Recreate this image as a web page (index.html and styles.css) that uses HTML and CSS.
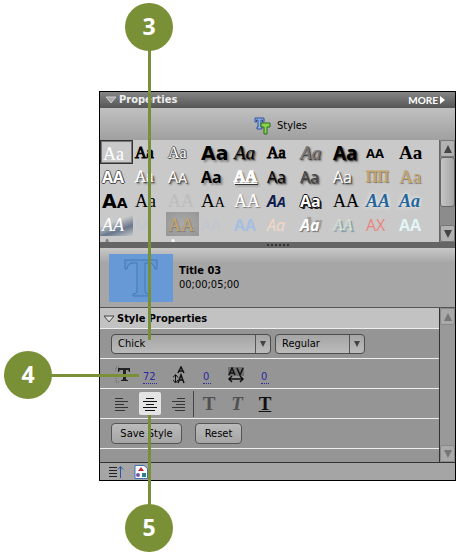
FILE: index.html
```html
<!DOCTYPE html>
<html lang="en">
<head>
  <meta charset="UTF-8" />
  <title>Title Properties</title>
  <meta name="viewport" content="width=device-width, initial-scale=1.0" />
  <link rel="stylesheet" href="styles.css">
</head>
<body>
  <div class="figure">
    <section class="panel">
      <header class="panel-header">
        <svg width="12" height="8" viewBox="0 0 12 8"><path d="M1 1h10L6 7z" fill="#aaa" stroke="#ccc" /></svg>
        <h1>Properties</h1>
        <button class="more" type="button">MORE<svg width="5" height="8" viewBox="0 0 5 8"><path d="M0 0l5 4-5 4z" fill="#fff" /></svg></button>
      </header>

      <div class="styles-bar">
        <svg width="17" height="18" viewBox="0 0 17 18">
          <path d="M1 1h9v4H8.500V3H7v7h1v2H3v-2h1V3H2.500v2H1z" fill="#8eb0e6" stroke="#31539b" />
          <path d="M7 6h9v4h-3v7h-3v-7H7z" fill="#8bd34a" stroke="#2c6c20" />
        </svg>
        <span>Styles</span>
      </div>

      <div class="browser">
        <div class="samples">
          <span class="sample selected serif white">Aa</span>
          <span class="sample narrow-serif">Aa</span>
          <span class="sample narrow-serif outline">Aa</span>
          <span class="sample black-sans large glow">Aa</span>
          <span class="sample script shadow">Aa</span>
          <span class="sample narrow-serif">Aa</span>
          <span class="sample script gray shadow">Aa</span>
          <span class="sample narrow-sans large shadow">Aa</span>
          <span class="sample narrow-sans small">AA</span>
          <span class="sample serif bold large">Aa</span>

          <span class="sample sans outline bold">AA</span>
          <span class="sample narrow-serif white shadow">Aa</span>
          <span class="sample sans white shadow">A<small>A</small></span>
          <span class="sample narrow-sans glow shadow">Aa</span>
          <span class="sample narrow-serif white bold underline shadow">AA</span>
          <span class="sample sans shadow">Aa</span>
          <span class="sample sans dim shadow">Aa</span>
          <span class="sample sans white shadow">Aa</span>
          <span class="sample narrow-serif gold">ΠΠ</span>
          <span class="sample serif gold large">Aa</span>

          <span class="sample black-sans large">A<small>A</small></span>
          <span class="sample serif">Aa</span>
          <span class="sample serif faint">AA</span>
          <span class="sample serif large">A<small>A</small></span>
          <span class="sample serif white soft">AA</span>
          <span class="sample sans navy italic bold">A<small>A</small></span>
          <span class="sample narrow-sans outline shadow">Aa</span>
          <span class="sample serif">AA</span>
          <span class="sample serif blue italic bold">AA</span>
          <span class="sample serif blue italic bold">Aa</span>

          <span class="sample serif white italic sky">AA</span>
          <span class="sample sans pale">M</span>
          <span class="sample serif gold frame">AA</span>
          <span class="sample sans pale">AA</span>
          <span class="sample sans light-blue bold">AA</span>
          <span class="sample sans peach italic">Aa</span>
          <span class="sample sans white italic bold high-shadow">Aa</span>
          <span class="sample narrow-serif mint italic">AA</span>
          <span class="sample sans red">AX</span>
          <span class="sample sans ice bold">AA</span>

          <span class="sample last sans gray">A</span>
          <span class="sample last"></span>
          <span class="sample last sans white">A</span>
        </div>
        <div class="scrollbar">
          <button type="button" aria-label="Scroll styles up"><svg width="8" height="8" viewBox="0 0 8 8"><path d="M4 0l4 8H0z" fill="#444" /></svg></button>
          <span class="thumb"></span>
          <button type="button" aria-label="Scroll styles down"><svg width="8" height="8" viewBox="0 0 8 8"><path d="M4 8l4-8H0z" fill="#444" /></svg></button>
        </div>
      </div>

      <div class="splitter"><span class="grip"></span></div>

      <div class="clip">
        <div class="thumbnail">
          <svg width="36" height="40" viewBox="0 0 36 40"><path d="M2 2h32v9h-2q-1-6-6-6h-4v28q0 3 4 3v2H10v-2q4 0 4-3V5h-4q-5 0-6 6H2z" fill="#6296d2" stroke="#4378b5" stroke-width="1" /></svg>
        </div>
        <div class="clip-text">
          <strong>Title 03</strong>
          <span>00;00;05;00</span>
        </div>
      </div>

      <div class="properties">
        <form class="controls">
          <h2><svg width="12" height="9" viewBox="0 0 12 9"><path d="M1 1h10L6 7z" fill="#ddd" stroke="#444" /></svg>Style Properties</h2>

          <div class="row fonts">
            <label class="dropdown family">
              <select aria-label="Font"><option>Chick</option></select>
              <span class="arrow"></span>
            </label>
            <label class="dropdown weight">
              <select aria-label="Font style"><option>Regular</option></select>
              <span class="arrow"></span>
            </label>
          </div>

          <div class="row numbers">
            <label for="size" aria-label="Size">
              <svg width="16" height="18" viewBox="0 0 16 18">
                <path d="M1 5V1h4M1 12v4h4" fill="none" stroke="#666" stroke-dasharray="1 1" />
                <path d="M3 2h12v4h-1q0-2-2-2h-1v9q0 1 2 1v1H6v-1q2 0 2-1V4H6Q4 4 4 6H3z" fill="#222" />
              </svg>
            </label>
            <input id="size" type="text" value="72">
            <label for="leading" aria-label="Leading">
              <svg width="14" height="18" viewBox="0 0 14 18">
                <path d="M5 7l3-6 3 6M6 5h4M5 17l3-8 3 8M6 14h4" fill="none" stroke="#111" stroke-width="1.500" />
                <path d="M2.500 9v7M0 11.500l2.500-3 2.500 3M0 14l2.500 3 2.500-3" fill="none" stroke="#111" />
              </svg>
            </label>
            <input id="leading" type="text" value="0">
            <label for="kerning" aria-label="Kerning">
              <svg width="18" height="16" viewBox="0 0 18 16">
                <path d="M1 0h16v9H1z" fill="#707070" />
                <path d="M2 8l3-7 3 7M3 6h4M10 1l3 7 3-7M2 12h14M5 9l-3 3 3 3M13 9l3 3-3 3" fill="none" stroke="#111" stroke-width="1.500" />
              </svg>
            </label>
            <input id="kerning" type="text" value="0">
          </div>

          <div class="row tools">
            <button type="button" aria-label="Align left"><svg width="16" height="16" viewBox="0 0 16 16"><path d="M1 2.500h8M1 5.500h13M1 8.500h9M1 11.500h13M1 14.500h10" stroke="#333" /></svg></button>
            <button class="active" type="button" aria-label="Align center"><svg width="16" height="16" viewBox="0 0 16 16"><path d="M4 2.500h8M1 5.500h14M4 8.500h8M1 11.500h14M3 14.500h10" stroke="#111" /></svg></button>
            <button type="button" aria-label="Align right"><svg width="16" height="16" viewBox="0 0 16 16"><path d="M7 2.500h8M2 5.500h13M6 8.500h9M2 11.500h13M5 14.500h10" stroke="#333" /></svg></button>
            <span class="divider"></span>
            <button class="letter" type="button" aria-label="Bold">T</button>
            <button class="letter italic" type="button" aria-label="Italic">T</button>
            <button class="letter underlined" type="button" aria-label="Underline">T</button>
          </div>

          <div class="row actions">
            <button class="save" type="button">Save Style</button>
            <button class="reset" type="button">Reset</button>
          </div>
        </form>
        <div class="scrollbar disabled">
          <button type="button" aria-label="Scroll properties up" disabled><svg width="8" height="8" viewBox="0 0 8 8"><path d="M4 0l4 8H0z" fill="#777" /></svg></button>
          <button type="button" aria-label="Scroll properties down" disabled><svg width="8" height="8" viewBox="0 0 8 8"><path d="M4 8l4-8H0z" fill="#777" /></svg></button>
        </div>
      </div>

      <footer class="panel-footer">
        <button type="button" aria-label="Sort"><svg width="16" height="14" viewBox="0 0 16 14"><path d="M1 2.500h8M1 5.500h8M1 8.500h8M1 11.500h8" stroke="#222" /><path d="M12.500 13V2M10 4.500l2.500-3 2.500 3" fill="none" stroke="#2856a5" /></svg></button>
        <button type="button" aria-label="Effects"><svg width="14" height="14" viewBox="0 0 14 14"><path d="M1 .5h9l3.500 3v10H1z" fill="#fff" stroke="#4470b5" /><path d="M7 2l3 4H4z" fill="#c5283d" /><circle cx="4" cy="10" r="2" fill="#7554a9" /><path d="M8 8h4v4H8z" fill="#2d7d91" /></svg></button>
      </footer>
    </section>

    <!-- numbered callouts over the panel -->
    <div class="callout three"><span class="badge">3</span></div>
    <div class="callout four"><span class="badge">4</span></div>
    <div class="callout five"><span class="badge">5</span></div>
  </div>
</body>
</html>
```
FILE: styles.css
```css
* {
  box-sizing: border-box;
}

body {
  margin: 0;
  background: #fff;
  color: #000;
  font-family: 'DejaVu Sans Condensed', 'DejaVu Sans', sans-serif;
  font-size: 11px;
  line-height: 14px;
}

button,
input,
select {
  margin: 0;
  padding: 0;
  border: 0;
  background: none;
  color: inherit;
  font: inherit;
}

svg {
  display: block;
  flex: none;
}

.figure {
  position: relative;
  min-height: 556px;
  padding: 91px 0 75px 99px;
}

.panel {
  border: 1px solid #000;
  background: #a5a5a5;
}

.panel-header {
  display: flex;
  align-items: center;
  gap: 2px;
  height: 16px;
  padding: 0 10px 0 5px;
  background: linear-gradient(#858585, #555);
  color: #eee;
}

.panel-header h1 {
  margin: 0;
  font-size: 11px;
}

.more {
  display: flex;
  align-items: center;
  gap: 2px;
  margin-left: auto;
  color: #fff;
  font-family: Lato, sans-serif;
  font-size: 10px;
  font-weight: bold;
}

.styles-bar {
  display: flex;
  align-items: center;
  justify-content: center;
  gap: 6px;
  height: 32px;
  padding: 3px 0 0 6px;
  background: linear-gradient(#c0c0c0, #a0a0a0);
}

/* style browser */
.browser {
  display: flex;
  height: 102px;
  background: #c9c9c9;
}

.samples {
  flex: 1;
  display: grid;
  grid-template-columns: repeat(10, 1fr);
  grid-auto-rows: 24px;
  padding-right: 9px;
  overflow: hidden;
}

.sample {
  padding-left: 2px;
  font-size: 16px;
  line-height: 26px;
  white-space: nowrap;
}

.sample small { font-size: 14px; }
.sample.last { line-height: 18px; }
.selected { border: 1px solid #333; box-shadow: inset 0 0 0 1px #777; }
.serif { font-family: 'Liberation Serif', serif; font-size: 18px; }
.sans { font-family: 'Open Sans', sans-serif; }
.narrow-serif { font-family: 'Liberation Serif', serif; font-size: 16px; -webkit-text-stroke: 1px; paint-order: stroke; }
.narrow-sans { font-family: 'Open Sans', sans-serif; font-size: 16px; font-weight: bold; }
.black-sans { font-family: 'DejaVu Sans', sans-serif; font-weight: bold; }
.script { font-family: 'Liberation Serif', serif; font-size: 19px; font-style: italic; }
.sample.large { font-size: 19px; }
.sample.small { font-size: 13px; }
.bold { font-weight: bold; }
.italic { font-style: italic; }
.underline { text-decoration: underline; }
.white { color: #fff; }
.gray { color: #777; }
.dim { color: #444; }
.gold { color: #c4a56d; text-shadow: 1px 1px 1px #777; }
.faint { color: #bcbcbc; }
.navy { color: #101d4f; }
.blue { color: #23669c; text-shadow: 0 0 4px #fff; }
.pale { color: #c0c6cf; }
.light-blue { color: #a5bfe0; }
.peach { color: #f5d8c7; }
.mint { color: #d7e4cf; text-shadow: 2px 2px 1px #7797aa; -webkit-text-stroke: 0; }
.red { color: #eb8580; }
.ice { color: #e1f5f5; }
.outline { color: #fff; -webkit-text-stroke: 0; text-shadow: 1px 0 #444, -1px 0 #666, 0 1px #444, 0 -1px #666; }
.shadow { text-shadow: 1px 1px 1px #333, 2px 2px 2px #777; }
.outline.shadow { text-shadow: 1px 0 #111, -1px 0 #111, 0 1px #111, 0 -1px #111, 2px 2px #222; }
.soft { text-shadow: 1px 1px 1px #777; }
.glow { text-shadow: 2px 2px 2px #888; }
.high-shadow { text-shadow: 3px -2px 1px #999, 1px 1px 1px #666; }
.sky { background: linear-gradient(160deg, #c9c9c9 40%, #68778d 70%, #c9c9c9); }
.frame { background: radial-gradient(#aaa, #969696); }

.scrollbar {
  display: flex;
  flex-direction: column;
  width: 16px;
  border-left: 1px solid #666;
  background: #8c8c8c;
}

.scrollbar button {
  display: flex;
  align-items: center;
  justify-content: center;
  height: 17px;
  border: 1px solid #777;
  border-radius: 2px;
  background: #b2b2b2;
}

.scrollbar button:last-child {
  margin-top: auto;
}

.thumb {
  height: 50px;
  border: 1px solid #666;
  border-radius: 3px;
  background: linear-gradient(90deg, #c5c5c5, #a5a5a5);
}

.scrollbar.disabled {
  border-color: #333;
  background: #999;
}

.disabled button {
  border-color: #888;
  background: #a9a9a9;
}

.splitter {
  display: flex;
  justify-content: center;
  align-items: center;
  height: 6px;
  background: #656565;
}

.grip {
  width: 22px;
  border-top: 2px dotted #333;
}

/* current clip */
.clip {
  display: flex;
  gap: 6px;
  height: 59px;
  padding: 6px 9px;
  background: linear-gradient(#c8c8c8, #a6a6a6 15px);
}

.thumbnail {
  display: grid;
  place-items: center;
  width: 64px;
  height: 48px;
  background: #6699d6;
}

.clip-text {
  display: flex;
  flex-direction: column;
  padding-top: 10px;
}

.properties {
  display: flex;
  border-top: 1px solid #555;
  border-bottom: 1px solid #333;
}

.controls {
  flex: 1;
  padding-bottom: 13px;
  background: #959595;
}

.controls h2 {
  display: flex;
  align-items: center;
  gap: 2px;
  height: 21px;
  margin: 0;
  padding: 2px 0 0 3px;
  border-bottom: 1px solid #eee;
  background: #c2c2c2;
  font-size: 11px;
}

.row {
  display: flex;
  align-items: center;
  height: 30px;
  padding-left: 11px;
  border-bottom: 1px solid #eee;
}

.fonts {
  gap: 4px;
}

.dropdown {
  position: relative;
}

.family { width: 160px; }
.weight { width: 90px; }

.dropdown select {
  appearance: none;
  display: block;
  width: 100%;
  height: 20px;
  padding: 0 20px 0 6px;
  border: 1px solid #4c4c4c;
  border-radius: 4px;
  background: linear-gradient(#a5a5a5, #bbb);
}

.arrow {
  position: absolute;
  top: 1px;
  right: 1px;
  bottom: 1px;
  display: grid;
  place-items: center;
  width: 15px;
  border-left: 1px solid #555;
  pointer-events: none;
}

.arrow::before {
  content: '';
  border: 3px solid transparent;
  border-top: 6px solid #444;
  border-bottom: 0;
}

.numbers {
  display: grid;
  grid-template-columns: 28px 30px 30px 24px 34px 20px;
  padding: 2px 0 0 15px;
}

.numbers input {
  width: 8px;
  height: 18px;
  padding-top: 4px;
  border-bottom: 1px dotted #2929a0;
  color: #2929a0;
}

.numbers #size {
  width: 14px;
}

.tools {
  gap: 6px;
}

.tools button {
  display: grid;
  place-items: center;
  width: 22px;
  height: 23px;
  border-radius: 2px;
}

.tools .active {
  background: #e4e4e4;
}

.divider {
  width: 1px;
  height: 26px;
  margin: 0 -2px;
  background: #444;
}

.tools .letter {
  color: #505050;
  font-family: 'Liberation Serif', serif;
  font-size: 19px;
  font-weight: bold;
}

.tools .underlined {
  color: #111;
  text-decoration: underline;
}

.actions {
  gap: 13px;
}

.actions button {
  height: 21px;
  border: 1px solid #555;
  border-radius: 4px;
  background: linear-gradient(#bbb, #a5a5a5);
}

.save { width: 71px; }
.reset { width: 47px; }

.panel-footer {
  display: flex;
  align-items: center;
  gap: 10px;
  height: 17px;
  padding-left: 8px;
}

/* callouts */
.callout {
  position: absolute;
  display: flex;
  background: linear-gradient(#7a9036, #7a9036) center / 3px 100% no-repeat;
}

.badge {
  width: 48px;
  height: 48px;
  border-radius: 50%;
  background: #7a9036;
  color: #fff;
  font-family: 'Open Sans', sans-serif;
  font-size: 23px;
  font-weight: bold;
  line-height: 46px;
  text-align: center;
}

.three {
  top: 3px;
  left: 125px;
  height: 337px;
}

.four {
  top: 351px;
  left: 4px;
  width: 135px;
  background-size: 100% 3px;
}

.five {
  top: 415px;
  left: 125px;
  height: 137px;
  align-items: flex-end;
}
```
